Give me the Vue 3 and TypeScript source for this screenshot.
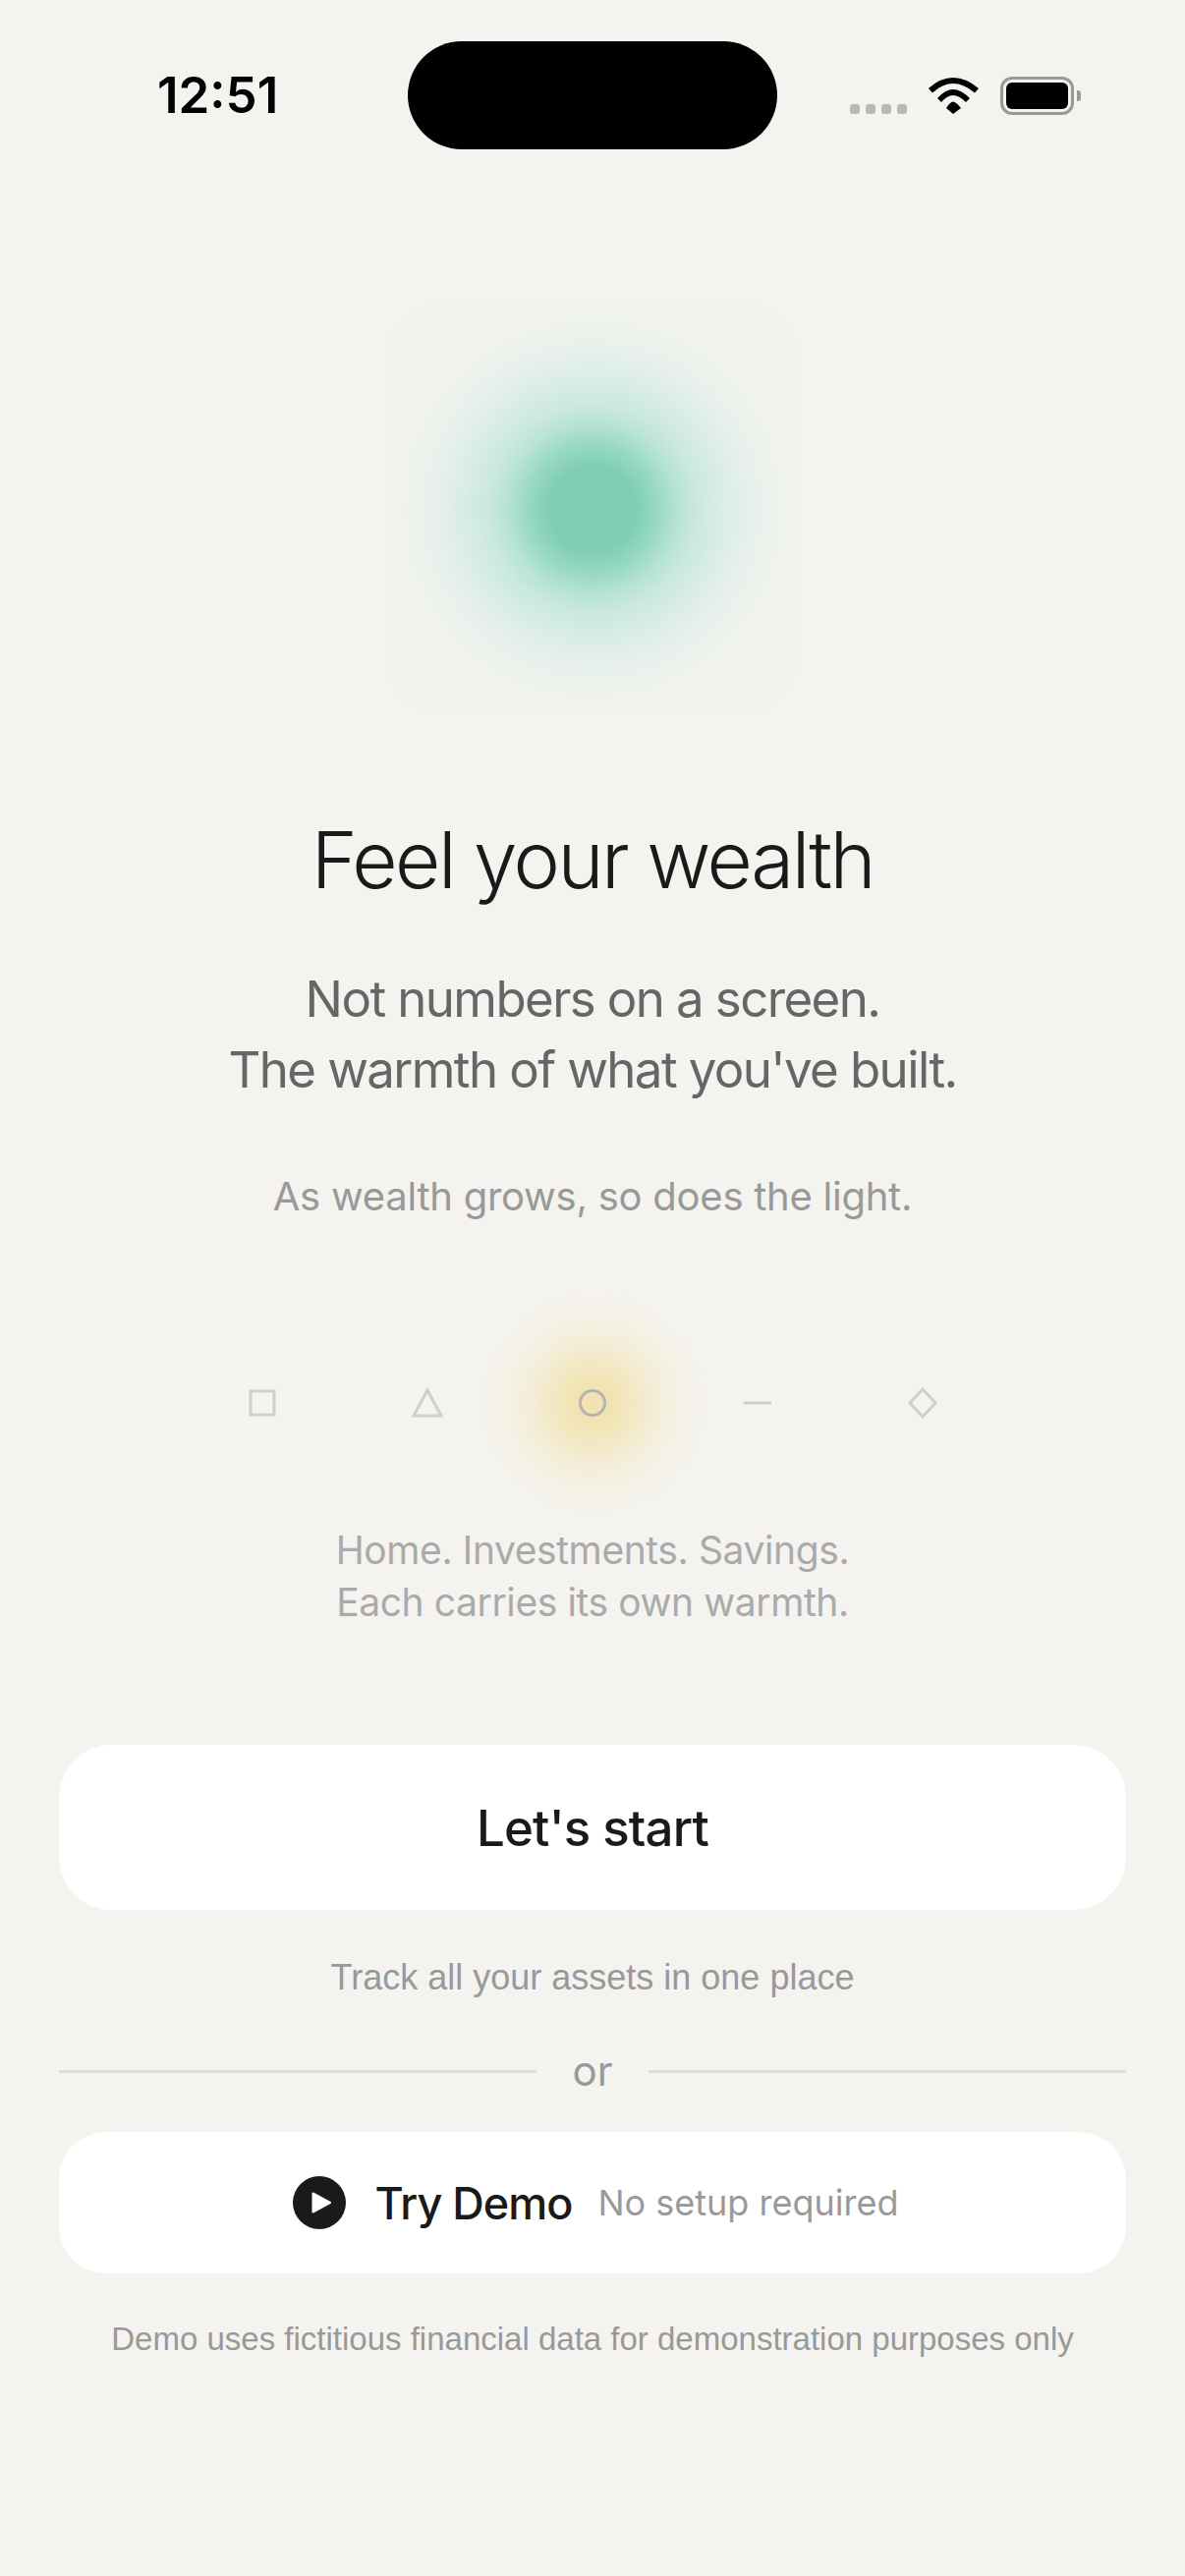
<script setup lang="ts">
const shapes: string[] = ['square', 'triangle', 'circle', 'dash', 'diamond']
</script>

<template>
  <div class="screen">
    <header class="status">
      <span class="time">12:51</span>
      <div class="island"></div>
      <div class="status-icons">
        <div class="dots"><i></i><i></i><i></i><i></i></div>
        <svg class="wifi" viewBox="100 15 60 45" width="60" height="45">
          <path d="M105 30Q117 19 130 19Q143 19 156 30L152 34.500Q141 25 130 25Q119 25 109 34.500Z" fill="#000" />
          <path d="M114 40Q122 31 130 31Q138 31 147 40L143 44Q136 37 130 37Q124 37 118 44Z" fill="#000" />
          <path d="M123 50Q127 43.500 130 43.500Q133 43.500 138 50L130 56Z" fill="#000" />
        </svg>
        <div class="battery"><div class="battery-fill"></div></div>
        <div class="nub"></div>
      </div>
    </header>

    <div class="orb"></div>

    <h1 class="title">Feel your wealth</h1>
    <p class="sub">Not numbers on a screen.<br />The warmth of what you've built.</p>
    <p class="note">As wealth grows, so does the light.</p>

    <div class="shapes">
      <div class="glow"></div>
      <div v-for="s in shapes" :key="s" class="cell">
        <svg v-if="s === 'square'" viewBox="0 0 30 30" width="30" height="30"><rect x="3" y="3" width="24" height="24" class="sh" /></svg>
        <svg v-else-if="s === 'triangle'" viewBox="0 0 32 32" width="32" height="32"><path d="M16 3L30 29H2Z" class="sh" /></svg>
        <svg v-else-if="s === 'circle'" viewBox="0 0 30 30" width="30" height="30"><circle cx="15" cy="15" r="12.500" class="sh dark" /></svg>
        <svg v-else-if="s === 'dash'" viewBox="0 0 30 30" width="30" height="30"><path d="M1 15H29" class="sh" /></svg>
        <svg v-else viewBox="0 0 32 32" width="32" height="32"><path d="M16 2L29 16L16 30L3 16Z" class="sh" /></svg>
      </div>
    </div>

    <p class="carry">Home. Investments. Savings.<br />Each carries its own warmth.</p>

    <button class="btn start">Let's start</button>
    <p class="track">Track all your assets in one place</p>

    <div class="or"><span class="line"></span><span class="or-text">or</span><span class="line"></span></div>

    <button class="btn demo">
      <svg class="play" viewBox="0 0 54 54" width="54" height="54">
        <circle cx="27" cy="27" r="27" fill="#1a1a1a" />
        <path d="M20.500 17.500L38 27L20.500 36.500Z" fill="#fff" stroke="#fff" stroke-width="2" stroke-linejoin="round" />
      </svg>
      <span class="demo-label">Try Demo</span>
      <span class="demo-hint">No setup required</span>
    </button>

    <p class="disclaimer">Demo uses fictitious financial data for demonstration purposes only</p>
  </div>
</template>

<style>
html, body { margin: 0; background: #f4f3ef; }
</style>

<style scoped>
.screen {
  width: 1206px;
  height: 2622px;
  background: #f4f3ef;
  display: flex;
  flex-direction: column;
  align-items: center;
  font-family: Inter, "Liberation Sans", sans-serif;
  overflow: hidden;
}
p, h1 { margin: 0; text-align: center; }

.status {
  width: 100%;
  box-sizing: border-box;
  height: 110px;
  margin-top: 42px;
  display: flex;
  align-items: center;
  padding-left: 160px;
}
.time {
  width: 255px;
  font-size: 51px;
  font-weight: 600;
  color: #000;
  line-height: 110px;
  height: 110px;
}
.island {
  width: 376px;
  height: 110px;
  border-radius: 55px;
  background: #000;
}
.status-icons {
  display: flex;
  align-items: center;
  margin-left: 74px;
  height: 60px;
}
.dots {
  display: flex;
  gap: 6px;
  margin-top: 28px;
}
.dots i {
  display: block;
  width: 10px;
  height: 10px;
  border-radius: 3px;
  background: #b8b8b6;
}
.wifi { margin-left: 17px; }
.battery {
  width: 75px;
  height: 39px;
  margin-left: 18px;
  box-sizing: border-box;
  border: 3px solid #999;
  border-radius: 12px;
  padding: 3px;
}
.battery-fill {
  width: 100%;
  height: 100%;
  background: #000;
  border-radius: 6px;
}
.nub {
  width: 4px;
  height: 11px;
  background: #999;
  margin-left: 3px;
  border-radius: 0 3px 3px 0;
}

.orb {
  width: 420px;
  height: 420px;
  margin-top: 156px;
  flex: none;
  border-radius: 60px;
  background: radial-gradient(circle closest-side,
    #80cfb5 0%, #80cfb5 21%, #9ad9c3 32%, #b8e4d4 42%, #cbe9dd 51%, #d9ede4 63%, #e8f0eb 77%, #eff2ed 92%, #f3f3ee 100%);
}

.title {
  margin-top: 97px;
  font-size: 80px;
  line-height: 100px;
  font-weight: 300;
  color: #1a1a1a;
  letter-spacing: -2.500px;
}
.sub {
  margin-top: 56px;
  font-size: 51px;
  line-height: 72px;
  font-weight: 400;
  color: #666;
  letter-spacing: -1.600px;
}
.note {
  margin-top: 63px;
  font-size: 40px;
  line-height: 60px;
  color: #999;
  letter-spacing: -0.250px;
}

.shapes {
  position: relative;
  margin-top: 150px;
  display: flex;
  height: 60px;
}
.glow {
  position: absolute;
  left: 50%;
  top: 50%;
  width: 240px;
  height: 240px;
  margin: -120px 0 0 -120px;
  background: radial-gradient(circle closest-side,
    #f2e4b2 0%, #f2e4b2 18%, #f3e9c8 38%, #f4eed9 55%, #f4f2e6 75%, #f4f3ef 100%);
}
.cell {
  position: relative;
  width: 168px;
  display: flex;
  align-items: center;
  justify-content: center;
}
.sh {
  fill: none;
  stroke: #cfcfcc;
  stroke-width: 3;
}
.sh.dark { stroke: #b4b4b4; }

.carry {
  margin-top: 93px;
  font-size: 39px;
  line-height: 53px;
  color: #aaa;
  letter-spacing: -0.400px;
  position: relative;
}

.btn {
  border: none;
  background: #fff;
  width: 1086px;
  flex: none;
  display: flex;
  align-items: center;
  justify-content: center;
  font-family: inherit;
  padding: 0;
}
.start {
  margin-top: 119px;
  height: 168px;
  border-radius: 54px;
  font-size: 51px;
  font-weight: 500;
  color: #1a1a1a;
  letter-spacing: -0.800px;
}
.track {
  margin-top: 44px;
  font-family: "Liberation Sans", sans-serif;
  font-size: 36px;
  line-height: 50px;
  color: #999;
}
.or {
  margin-top: 40px;
  width: 1086px;
  height: 60px;
  display: flex;
  align-items: center;
  justify-content: space-between;
}
.line {
  width: 486px;
  height: 3px;
  background: #dddcd8;
}
.or-text {
  font-size: 42px;
  line-height: 60px;
  color: #999;
}
.demo {
  margin-top: 32px;
  height: 144px;
  border-radius: 48px;
  padding-left: 6px;
  box-sizing: border-box;
}
.play { flex: none; }
.demo-label {
  margin-left: 30px;
  font-size: 45px;
  font-weight: 500;
  color: #1a1a1a;
  letter-spacing: -1px;
}
.demo-hint {
  margin-left: 26px;
  font-size: 36px;
  color: #999;
}
.disclaimer {
  margin-top: 42px;
  font-family: "Liberation Sans", sans-serif;
  font-size: 33px;
  line-height: 50px;
  color: #999;
}
</style>
